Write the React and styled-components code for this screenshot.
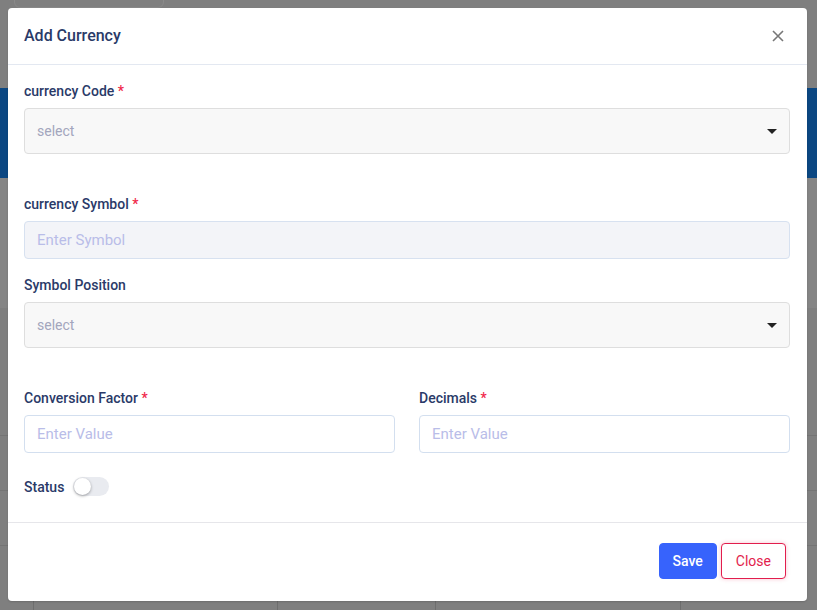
import React from "react";
import styled, { createGlobalStyle } from "styled-components";

const Global = createGlobalStyle`
  html, body { margin: 0; padding: 0; }
  body { font-family: Roboto, "Noto Sans", Arial, sans-serif; background: #808080; }
  * { box-sizing: border-box; }
`;

const Backdrop = styled.div`
  position: relative;
  width: 817px;
  height: 610px;
  background: #7f7f7f;
  overflow: hidden;
`;

const BgTab = styled.div`
  position: absolute;
  left: 14px;
  top: -6px;
  width: 150px;
  height: 14px;
  border: 1px solid #8a8a8a;
  border-radius: 6px;
`;

const BgBand = styled.div`
  position: absolute;
  left: 0;
  right: 0;
  top: 88px;
  height: 90px;
  background: #0b4782;
`;

const BgLight = styled.div`
  position: absolute;
  left: 0;
  right: 0;
  top: 178px;
  height: 130px;
  background: #858585;
`;

const BgLine = styled.div`
  position: absolute;
  left: 0;
  right: 0;
  height: 1px;
  background: #747474;
`;

const BgVLine = styled.div`
  position: absolute;
  top: 600px;
  bottom: 0;
  width: 1px;
  background: #6e6e6e;
`;

const Modal = styled.div`
  position: absolute;
  left: 8px;
  top: 8px;
  width: 799px;
  height: 593px;
  background: #fff;
  border-radius: 4px;
  display: flex;
  flex-direction: column;
  box-shadow: 0 1px 2px rgba(0,0,0,0.15);
`;

const Header = styled.div`
  height: 57px;
  display: flex;
  align-items: center;
  justify-content: space-between;
  padding: 0 22px 1px 16px;
  border-bottom: 1px solid #e3e8f1;
`;

const Title = styled.h5`
  margin: 0;
  font-size: 16px;
  font-weight: 500;
  color: #2a3a68;
`;

const CloseX = styled.button`
  border: 0;
  background: none;
  padding: 0;
  width: 14px;
  height: 14px;
  display: flex;
  align-items: center;
  justify-content: center;
  cursor: pointer;
`;

const Body = styled.div`
  flex: 1;
  padding: 16px 17px 0 16px;
`;

const Group = styled.div`
  display: flex;
  flex-direction: column;
  margin-bottom: ${(p) => p.$mb}px;
`;

const Label = styled.label`
  font-size: 14px;
  line-height: 21px;
  font-weight: 500;
  color: #2a3a68;
  margin-bottom: 6px;
`;

const Req = styled.span`
  color: #f0284a;
`;

const SelectBox = styled.div`
  height: 46px;
  border: 1px solid #dedede;
  border-radius: 4px;
  background: #f8f8f8;
  display: flex;
  align-items: center;
  justify-content: space-between;
  padding: 0 12px 0 12px;
  font-size: 14px;
  color: #a3a6bd;
`;

const Caret = styled.span`
  width: 0;
  height: 0;
  border-left: 5px solid transparent;
  border-right: 5px solid transparent;
  border-top: 5px solid #222;
`;

const Input = styled.input`
  height: 38px;
  width: 100%;
  border: 1px solid ${(p) => (p.$muted ? "#d7e1f0" : "#d3dfef")};
  border-radius: 4px;
  background: ${(p) => (p.$muted ? "#f3f4f8" : "#fff")};
  padding: 0 12px;
  font-family: inherit;
  font-size: 15px;
  outline: none;
  &::placeholder { color: #b9bde8; }
`;

const Row = styled.div`
  display: grid;
  grid-template-columns: 1fr 1fr;
  column-gap: 24px;
`;

const StatusRow = styled.div`
  display: flex;
  align-items: center;
  gap: 9px;
`;

const StatusLabel = styled.span`
  font-size: 14px;
  font-weight: 500;
  color: #2a3a68;
`;

const Toggle = styled.span`
  position: relative;
  width: 36px;
  height: 19px;
  border-radius: 10px;
  background: #e9ebf0;
`;

const Knob = styled.span`
  position: absolute;
  left: 1px;
  top: 1px;
  width: 17px;
  height: 17px;
  border-radius: 50%;
  background: #fff;
  box-shadow: 0 1px 3px rgba(0,0,0,0.35);
`;

const Footer = styled.div`
  height: 79px;
  border-top: 1px solid #e6e6ea;
  display: flex;
  justify-content: flex-end;
  align-items: flex-start;
  padding: 20px 21px 0 0;
  gap: 4px;
`;

const Button = styled.button`
  height: 36px;
  padding: 0 ${(p) => (p.$primary ? 13 : 14)}px;
  border-radius: 4px;
  font-family: inherit;
  font-size: 14px;
  font-weight: ${(p) => (p.$primary ? 500 : 400)};
  border: 1px solid ${(p) => (p.$primary ? "#3763fc" : "#e21d4d")};
  background: ${(p) => (p.$primary ? "#3763fc" : "#fff")};
  color: ${(p) => (p.$primary ? "#fff" : "#e21d4d")};
  box-shadow: ${(p) => (p.$primary ? "none" : "0 0 4px rgba(226,29,77,0.25)")};
  cursor: pointer;
`;

export default function App() {
  return (
    <>
      <Global />
      <Backdrop>
        <BgTab />
        <BgBand />
        <BgLight />
        <BgLine style={{ top: 435 }} />
        <BgLine style={{ top: 490 }} />
        <BgLine style={{ top: 545 }} />
        <BgVLine style={{ left: 33 }} />
        <BgVLine style={{ left: 277 }} />
        <BgVLine style={{ left: 435 }} />
        <BgVLine style={{ left: 680 }} />
        <Modal>
          <Header>
            <Title>Add Currency</Title>
            <CloseX aria-label="Close">
              <svg width="12" height="12" viewBox="0 0 12 12">
                <path d="M1 1L11 11M11 1L1 11" stroke="#777" strokeWidth="1.6" />
              </svg>
            </CloseX>
          </Header>
          <Body>
            <Group $mb={40}>
              <Label>currency Code <Req>*</Req></Label>
              <SelectBox>
                <span>select</span>
                <Caret />
              </SelectBox>
            </Group>
            <Group $mb={16}>
              <Label>currency Symbol <Req>*</Req></Label>
              <Input $muted placeholder="Enter Symbol" />
            </Group>
            <Group $mb={40}>
              <Label>Symbol Position</Label>
              <SelectBox>
                <span>select</span>
                <Caret />
              </SelectBox>
            </Group>
            <Row>
              <Group $mb={24}>
                <Label>Conversion Factor <Req>*</Req></Label>
                <Input placeholder="Enter Value" />
              </Group>
              <Group $mb={24}>
                <Label>Decimals <Req>*</Req></Label>
                <Input placeholder="Enter Value" />
              </Group>
            </Row>
            <StatusRow>
              <StatusLabel>Status</StatusLabel>
              <Toggle><Knob /></Toggle>
            </StatusRow>
          </Body>
          <Footer>
            <Button $primary>Save</Button>
            <Button>Close</Button>
          </Footer>
        </Modal>
      </Backdrop>
    </>
  );
}
